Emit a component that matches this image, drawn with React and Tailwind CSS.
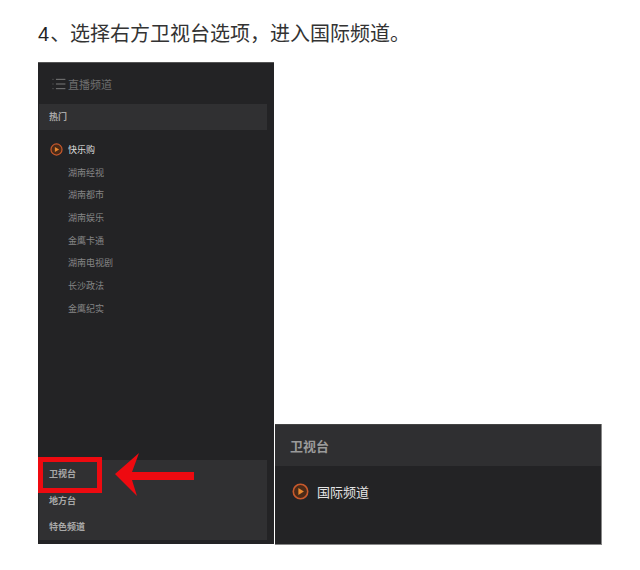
import { List } from 'lucide-react'

const cjk = "font-['Noto_Sans_CJK_SC',sans-serif]"

const channels = ['湖南经视', '湖南都市', '湖南娱乐', '金鹰卡通', '湖南电视剧', '长沙政法', '金鹰纪实']

function PlayIcon({ size }) {
  return (
    <svg width={size} height={size} viewBox="0 0 16 16" className="shrink-0">
      <circle cx="8" cy="8" r="6.8" fill="#4a2a18" stroke="#c8592c" strokeWidth="1.5" />
      <path d="M6 4.8 L11.2 8 L6 11.2 Z" fill="#e8892f" />
    </svg>
  )
}

export default function App() {
  return (
    <div className={`w-[640px] h-[570px] bg-white overflow-hidden ${cjk}`}>
      <h1 className="pl-[38px] pt-[19px] h-[62px] text-[20px] leading-[28px] text-[#333333] font-normal">
        <span className="font-['Liberation_Sans',sans-serif] text-[#222222] mr-px">4</span>、选择右方卫视台选项，进入国际频道。
      </h1>

      <div className="flex items-start pl-[38px]">
        {/* Left panel */}
        <div className="relative w-[236px] h-[482px] bg-[#232325] border-t border-[#555555] flex flex-col">
          <div className="h-[41px] flex items-center pl-[13px] pt-px gap-px text-[11px] text-[#6f6f6f]">
            <List size={16} strokeWidth={1.4} color="#808080" />
            <span>直播频道</span>
          </div>

          <div className="ml-px w-[228px] h-[26px] bg-[#303032] flex items-center pl-[10px] text-[9px] font-bold text-[#a8a8a8]">
            热门
          </div>

          <div className="pt-[8px] pl-[12px] flex flex-col">
            <div className="h-[23px] flex items-center gap-[5px] text-[9px] text-[#dddddd]">
              <PlayIcon size={13} />
              <span>快乐购</span>
            </div>
            {channels.map((name) => (
              <div key={name} className="h-[22.7px] flex items-center pl-[18px] text-[9px] text-[#858585]">
                {name}
              </div>
            ))}
          </div>

          <div className="mt-auto mb-[4px] ml-px w-[228px] bg-[#303032] flex flex-col text-[9px] font-bold text-[#a8a8a8]">
            <div className="h-[27px] flex items-center pl-[10px]">卫视台</div>
            <div className="h-[27px] flex items-center pl-[10px]">地方台</div>
            <div className="h-[26px] flex items-center pl-[10px]">特色频道</div>
          </div>

          {/* Red highlight and arrow */}
          <div className="absolute left-0 top-[394px] w-[64px] h-[36px] border-[5px] border-[#ee0a10]" />
          <svg className="absolute left-[76px] top-[390px]" width="82" height="48" viewBox="0 0 82 48">
            <path d="M1 21 L25 0 L18 19 L80 19 L80 27 L18 27 L23 43 Z" fill="#ee0a10" />
          </svg>
        </div>

        {/* Right panel */}
        <div className="ml-px mt-[362px] w-[327px] h-[121px] bg-[#232325] border-b border-r border-[#888888] flex flex-col">
          <div className="h-[42px] bg-[#2f2f31] border-t border-[#444444] flex items-center pl-[15px] text-[13px] font-bold text-[#9a9a9a]">
            卫视台
          </div>
          <div className="pt-[16px] pl-[17px] flex items-center gap-[8px] text-[13px] text-[#e4e4e4]">
            <PlayIcon size={17} />
            <span>国际频道</span>
          </div>
        </div>
      </div>
    </div>
  )
}
